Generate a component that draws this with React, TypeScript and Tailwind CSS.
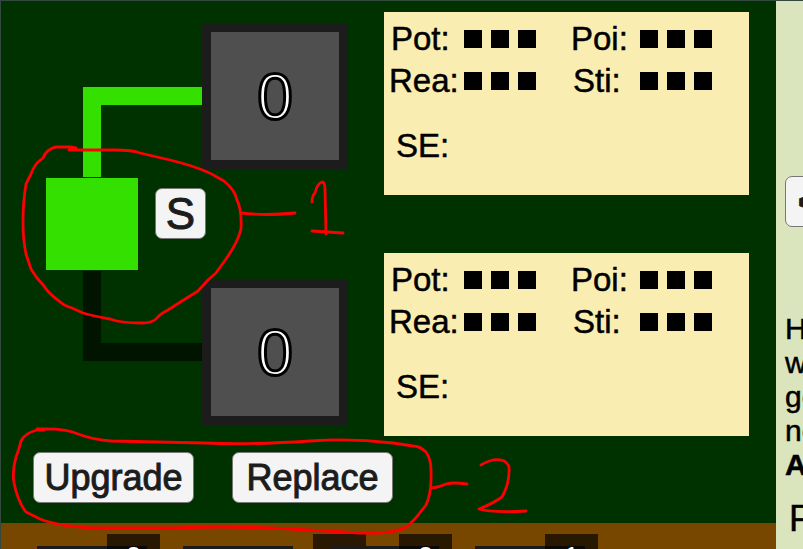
const squares = [0, 1, 2];

function Stat({ label, pad }: { label: string; pad: string }) {
  return (
    <div className="flex h-[42px] items-center">
      <span className={`w-[75px] ${pad}`}>{label}</span>
      <span className="flex gap-[9px]">
        {squares.map((i) => (
          <i key={i} className="size-[18px] bg-black" />
        ))}
      </span>
    </div>
  );
}

function StatPanel() {
  return (
    <section className="h-[183px] bg-[#faedb1] pt-[6px] text-[33px] leading-[40px] text-black [-webkit-text-stroke:0.5px_black]">
      <div className="grid grid-cols-[176px_1fr] pl-[5px]">
        <Stat label="Pot:" pad="pl-[2px]" />
        <Stat label="Poi:" pad="pl-[6px]" />
        <Stat label="Rea:" pad="pl-0" />
        <Stat label="Sti:" pad="pl-[8px]" />
      </div>
      <p className="mt-6 pl-3">SE:</p>
    </section>
  );
}

function Slot() {
  return (
    <div className="flex h-[146px] items-center justify-center border-[9px] border-[#1c1c1c] bg-[#4f4f4f] pt-[2px] text-[64px] leading-none text-white [-webkit-text-stroke:3px_black]">
      0
    </div>
  );
}

const button =
  "h-[51px] shrink-0 rounded-[7px] border border-[#777] bg-[#f4f4f4] pt-px leading-none text-[#1c1c1c] [-webkit-text-stroke:1px_#1c1c1c]";

const cards = [
  { count: "0", extra: false },
  { count: "", extra: false },
  { count: "0", extra: true },
  { count: "1", extra: false },
];

function Card({ count, extra }: { count: string; extra: boolean }) {
  return (
    <div className="relative h-[15px] w-[110px] shrink-0 pt-3">
      {extra && <div className="absolute -left-4 top-0 h-[15px] w-[53px] bg-[#2b1800]" />}
      <div className="relative h-[3px] bg-[#1c1a1a]" />
      {count && (
        <div className="absolute left-[70px] top-0 h-[15px] w-[53px] overflow-hidden bg-black/65 pt-[7px] text-center text-[28px] leading-8 text-white">
          {count}
        </div>
      )}
    </div>
  );
}

function Annotations() {
  return (
    <svg
      className="pointer-events-none absolute -left-px -top-px"
      width="803"
      height="549"
      viewBox="0 0 803 549"
      fill="none"
      stroke="#ff0000"
      strokeWidth="2.8"
      strokeLinecap="round"
      strokeLinejoin="round"
      aria-hidden="true"
    >
      <path d="M76 148L70 147L56 147Q50 148 45 154L43 158L37 163Q33 168 31 174L26 184Q23 202 23 222Q23 240 26 254L31 269L37 278L44 286Q48 293 59 301Q64 306 72 308L83 313Q93 316 110 319Q120 323 142 323Q153 323 157 318Q160 314 168 310L182 301L198 291L208 280L216 273L226 259Q238 242 241 229Q242 210 237 200Q235 190 224 181L215 176Q202 168 170 160L140 153Q133 150 114 150L69 150" />
      <path d="M242 213Q265 216 295 213M312 202Q312 196 315 193Q317 184 322 182Q325 182 325 190L326 234M312 231L343 233" />
      <path d="M44 430L37 430Q25 433 21 441Q19 450 16 457Q12 471 14 483Q18 502 26 512L40 519Q54 525 89 528L175 528Q220 526 270 528Q310 530 360 533Q395 534 406 527Q415 520 422 510L426 505Q432 493 431 470Q431 459 426 452Q420 446 413 446L393 443Q350 438 310 441Q250 445 205 443L111 441Q94 440 78 434Q65 428 37 429" />
      <path d="M432 488Q440 487 446 484Q453 482 467 484M481 465Q488 461 493 460Q506 458 509 467Q510 483 502 497Q492 504 479 509Q492 513 526 511" />
    </svg>
  );
}

export default function App() {
  return (
    <div className="relative flex h-screen overflow-hidden border-l border-t border-[#34493d] bg-[#003200] font-['Liberation_Sans',Arial,sans-serif]">
      <main className="flex min-w-0 flex-1 flex-col">
        <div className="flex h-[522px] shrink-0 flex-col">
          <div className="flex pr-[27px]">
            <div className="w-[201px] shrink-0 pt-[86px]">
              <div className="ml-[82px] h-[90px] border-l-[18px] border-t-[18px] border-[#33e000]" />
              <div className="my-px ml-[45px] flex items-start gap-[17px]">
                <div className="size-[92px] shrink-0 bg-[#33e000]" />
                <button className={`${button} mt-[10px] w-[51px] text-[44px]`}>S</button>
              </div>
              <div className="ml-[82px] h-[90px] border-b-[18px] border-l-[18px] border-[#001400]" />
            </div>
            <div className="flex w-[146px] shrink-0 flex-col gap-[110px] pt-[22px]">
              <Slot />
              <Slot />
            </div>
            <div className="ml-9 flex min-w-0 flex-1 flex-col gap-[58px] pt-[11px]">
              <StatPanel />
              <StatPanel />
            </div>
          </div>
          <div className="mt-4 flex gap-[38px] pl-8">
            <button className={`${button} w-[161px] text-[36px]`}>Upgrade</button>
            <button className={`${button} w-[161px] text-[36px]`}>Replace</button>
          </div>
        </div>
        <div className="flex flex-1 gap-9 overflow-hidden bg-[#774700] pl-9 pt-[11px]">
          {cards.map((card, i) => (
            <Card key={i} {...card} />
          ))}
        </div>
      </main>
      <aside className="w-[27px] shrink-0 overflow-hidden whitespace-nowrap bg-[#dbe5bd] pl-[9px] pt-[175px] text-[30px] leading-[34px] text-black [-webkit-text-stroke:0.5px_black]">
        <button className={`${button} block w-[51px] text-[44px] font-bold`}>&lt;</button>
        <div className="mt-[85px]">
          <p>H</p>
          <p>w</p>
          <p>ge</p>
          <p>ne</p>
          <p className="font-bold">A</p>
        </div>
        <p className="mt-5 pl-1 text-[36px]">P</p>
      </aside>
      <Annotations />
    </div>
  );
}
